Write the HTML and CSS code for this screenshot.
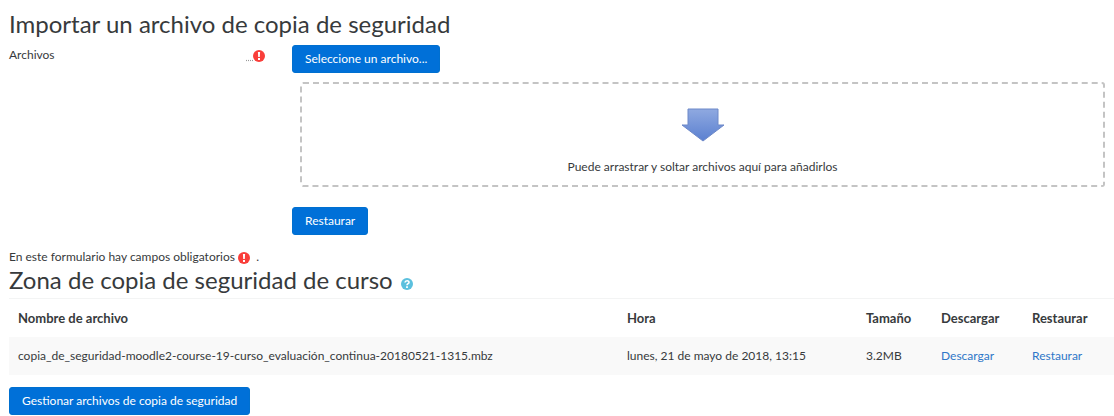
FILE: index.html
```html
<!DOCTYPE html>
<html lang="es">
  <head>
    <meta charset="utf-8" />
    <title>Restaurar curso</title>
    <link rel="stylesheet" href="styles.css">
  </head>
  <body>
    <svg class="symbols" aria-hidden="true">
      <symbol id="required" viewBox="0 0 12 12">
        <circle cx="6" cy="6" r="6" fill="#f93e3a" />
        <path d="M4.900 2h2.200l-.3 5H5.200zM5 8h2v2H5z" fill="#fff" />
      </symbol>
    </svg>

    <form>
      <h2>Importar un archivo de copia de seguridad</h2>
      <div class="row">
        <div class="row-label">
          <label for="choose">Archivos</label>
          <abbr title="Obligatorio">&nbsp;&nbsp;<svg class="icon"><use href="#required" /></svg></abbr>
        </div>
        <div class="row-field">
          <button type="button" class="btn" id="choose">Seleccione un archivo...</button>
          <div class="dropzone">
            <svg class="arrow" viewBox="0 0 44 34">
              <defs>
                <linearGradient id="blue" x1="0" y1="0" x2="0" y2="1">
                  <stop offset="0" stop-color="#8fa9e0" />
                  <stop offset="1" stop-color="#5b80d0" />
                </linearGradient>
              </defs>
              <path d="M7 1h30v16h6L22 33 1 17h6z" fill="url(#blue)" stroke="#6d88c8" />
            </svg>
            <p>Puede arrastrar y soltar archivos aquí para añadirlos</p>
          </div>
          <button type="submit" class="btn">Restaurar</button>
        </div>
      </div>
      <p class="note">En este formulario hay campos obligatorios <svg class="icon"><use href="#required" /></svg> &nbsp;.</p>
    </form>

    <h2>Zona de copia de seguridad de curso
      <svg class="icon help" viewBox="0 0 12 12">
        <circle cx="6" cy="6" r="6" fill="#5bc0de" />
        <path d="M4 4.500C4.200 2.200 8 2.200 8 4.400 8 5.700 6 5.700 6 7.300" fill="none" stroke="#fff" stroke-width="1.600" />
        <path d="M5.100 8.200h1.800v1.700H5.100z" fill="#fff" />
      </svg>
    </h2>
    <table>
      <thead>
        <tr>
          <th>Nombre de archivo</th>
          <th class="col-time">Hora</th>
          <th class="col-size">Tamaño</th>
          <th class="col-action">Descargar</th>
          <th class="col-action">Restaurar</th>
        </tr>
      </thead>
      <tbody>
        <tr>
          <td>copia_de_seguridad-moodle2-course-19-curso_evaluación_continua-20180521-1315.mbz</td>
          <td>lunes, 21 de mayo de 2018, 13:15</td>
          <td>3.2MB</td>
          <td><a href="#">Descargar</a></td>
          <td><a href="#">Restaurar</a></td>
        </tr>
      </tbody>
    </table>
    <button type="button" class="btn">Gestionar archivos de copia de seguridad</button>
  </body>
</html>
```

FILE: styles.css
```css
* {
  box-sizing: border-box;
}
body {
  margin: 0;
  padding: 10px 0 0 9px;
  font-family: Lato, "Liberation Sans", sans-serif;
  font-size: 12px;
  line-height: 20px;
  color: #373a3c;
  background: #fff;
}
h2 {
  margin: 0 0 4px;
  font-size: 24px;
  line-height: 28px;
  font-weight: 400;
}
p {
  margin: 0;
}
.symbols {
  position: absolute;
  width: 0;
  height: 0;
}
.icon {
  width: 12px;
  height: 12px;
  vertical-align: -3px;
}
.row {
  display: flex;
  padding-top: 3px;
}
.row-label {
  display: flex;
  flex: 0 0 283px;
  justify-content: space-between;
  align-items: flex-start;
  padding-right: 27px;
}
.row-field {
  flex: 1;
}
abbr {
  text-decoration: underline dotted #999;
}
.btn {
  display: block;
  height: 28px;
  padding: 0 12px;
  border: 1px solid #0070d0;
  border-radius: 3px;
  background: #0070d8;
  color: #fff;
  font: inherit;
  cursor: pointer;
}
.dropzone {
  display: flex;
  flex-direction: column;
  align-items: center;
  height: 105px;
  margin: 9px 9px 20px 8px;
  padding-top: 24px;
  border: 2px dashed #c4c4c4;
  border-radius: 3px;
}
.arrow {
  width: 44px;
  height: 34px;
  margin-bottom: 15px;
}
.note {
  margin-top: 13px;
  line-height: 18px;
}
.help {
  margin-left: 2px;
  vertical-align: -1px;
}
table {
  width: 100%;
  margin-bottom: 12px;
  border-collapse: collapse;
  table-layout: fixed;
}
th,
td {
  height: 38px;
  padding: 0 9px;
  text-align: left;
}
th {
  border-top: 1px solid #f3f4f4;
  font-size: 13px;
}
tbody tr {
  background: #f9f9f9;
}
.col-time {
  width: 239px;
}
.col-size {
  width: 75px;
}
.col-action {
  width: 91px;
}
a {
  color: #2f77c8;
  text-decoration: none;
}
```
